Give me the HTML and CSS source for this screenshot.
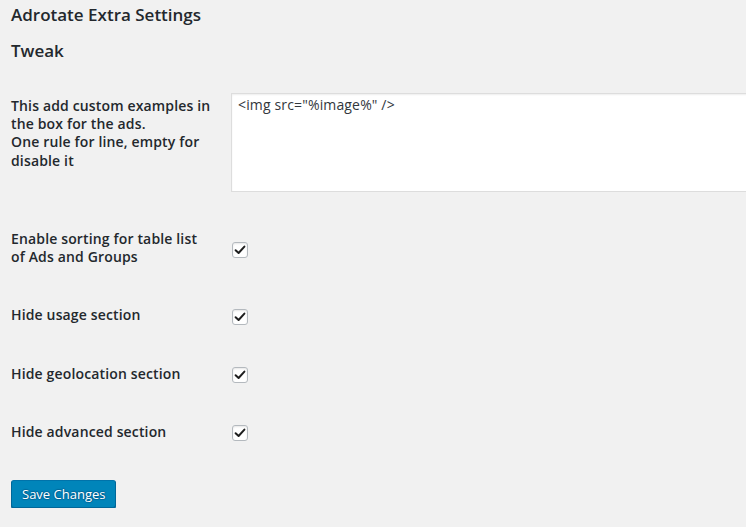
FILE: index.html
```html
<!DOCTYPE html>
<html>
<head>
<meta charset="utf-8">
<link rel="stylesheet" href="styles.css">
</head>
<body>
<div class="wrap">
  <h2 class="page-title">Adrotate Extra Settings</h2>
  <h2 class="section-title">Tweak</h2>
  <table class="form-table">
    <tr class="row-textarea">
      <th>This add custom examples in the box for the ads.<br>One rule for line, empty for disable it</th>
      <td><textarea class="large-text">&lt;img src="%image%" /&gt;</textarea></td>
    </tr>
    <tr>
      <th>Enable sorting for table list of Ads and Groups</th>
      <td><span class="check"><svg viewBox="0 0 16 16" width="16" height="16"><path d="M3.6 8.2 L6.6 11 L12.4 4.6" fill="none" stroke="#1e1e1e" stroke-width="2" stroke-linecap="round" stroke-linejoin="round"/></svg></span></td>
    </tr>
    <tr>
      <th>Hide usage section</th>
      <td><span class="check"><svg viewBox="0 0 16 16" width="16" height="16"><path d="M3.6 8.2 L6.6 11 L12.4 4.6" fill="none" stroke="#1e1e1e" stroke-width="2" stroke-linecap="round" stroke-linejoin="round"/></svg></span></td>
    </tr>
    <tr>
      <th>Hide geolocation section</th>
      <td><span class="check"><svg viewBox="0 0 16 16" width="16" height="16"><path d="M3.6 8.2 L6.6 11 L12.4 4.6" fill="none" stroke="#1e1e1e" stroke-width="2" stroke-linecap="round" stroke-linejoin="round"/></svg></span></td>
    </tr>
    <tr>
      <th>Hide advanced section</th>
      <td><span class="check"><svg viewBox="0 0 16 16" width="16" height="16"><path d="M3.6 8.2 L6.6 11 L12.4 4.6" fill="none" stroke="#1e1e1e" stroke-width="2" stroke-linecap="round" stroke-linejoin="round"/></svg></span></td>
    </tr>
  </table>
  <div class="submit"><button class="button-primary">Save Changes</button></div>
</div>
</body>
</html>
```
FILE: styles.css
```css
html, body {
  margin: 0;
  padding: 0;
  background: #f1f1f1;
  overflow: hidden;
}
body {
  font-family: "Open Sans", "Liberation Sans", sans-serif;
  font-size: 14px;
  color: #23282d;
  line-height: 1.3;
}
.wrap {
  padding: 4px 0 0 11px;
}
.page-title,
.section-title {
  font-size: 17px;
  font-weight: 600;
  line-height: 22px;
  margin: 0;
  color: #23282d;
}
.section-title {
  margin-top: 14px;
}
.form-table {
  border-collapse: collapse;
  table-layout: fixed;
  width: 800px;
  margin-top: 15px;
}
.form-table th {
  width: 200px;
  padding: 20px 10px 20px 0;
  text-align: left;
  vertical-align: top;
  font-weight: 600;
  line-height: 18.2px;
  letter-spacing: 0.15px;
}
.form-table td {
  padding: 0 10px;
  vertical-align: middle;
}
.row-textarea td {
  padding: 16px 10px 18px;
  vertical-align: top;
}
.large-text {
  display: block;
  box-sizing: border-box;
  width: 100%;
  height: 99px;
  margin: 0;
  padding: 2px 6px;
  border: 1px solid #ddd;
  box-shadow: inset 0 1px 2px rgba(0,0,0,.07);
  background: #fff;
  font-family: "Open Sans", "Liberation Sans", sans-serif;
  font-size: 14px;
  line-height: 18px;
  letter-spacing: 0.15px;
  color: #32373c;
  resize: none;
  outline: none;
}
.check {
  display: block;
  box-sizing: border-box;
  width: 16px;
  height: 16px;
  margin: 3px 0 0 1px;
  border: 1px solid #b4b9be;
  border-radius: 3px;
  background: #fff;
  box-shadow: inset 0 1px 2px rgba(0,0,0,.1);
  position: relative;
}
.check svg {
  position: absolute;
  left: -1px;
  top: -1px;
}
.submit {
  padding: 19px 0 0;
}
.button-primary {
  height: 28px;
  padding: 0 10px 1px;
  font-family: "Open Sans", "Liberation Sans", sans-serif;
  font-size: 13px;
  line-height: 26px;
  color: #fff;
  background: #0085ba;
  border: 1px solid;
  border-color: #0073aa #006799 #006799;
  border-radius: 3px;
  box-shadow: 0 1px 0 #006799;
  text-shadow: 0 -1px 1px #006799, 1px 0 1px #006799, 0 1px 1px #006799, -1px 0 1px #006799;
  cursor: pointer;
}
```
